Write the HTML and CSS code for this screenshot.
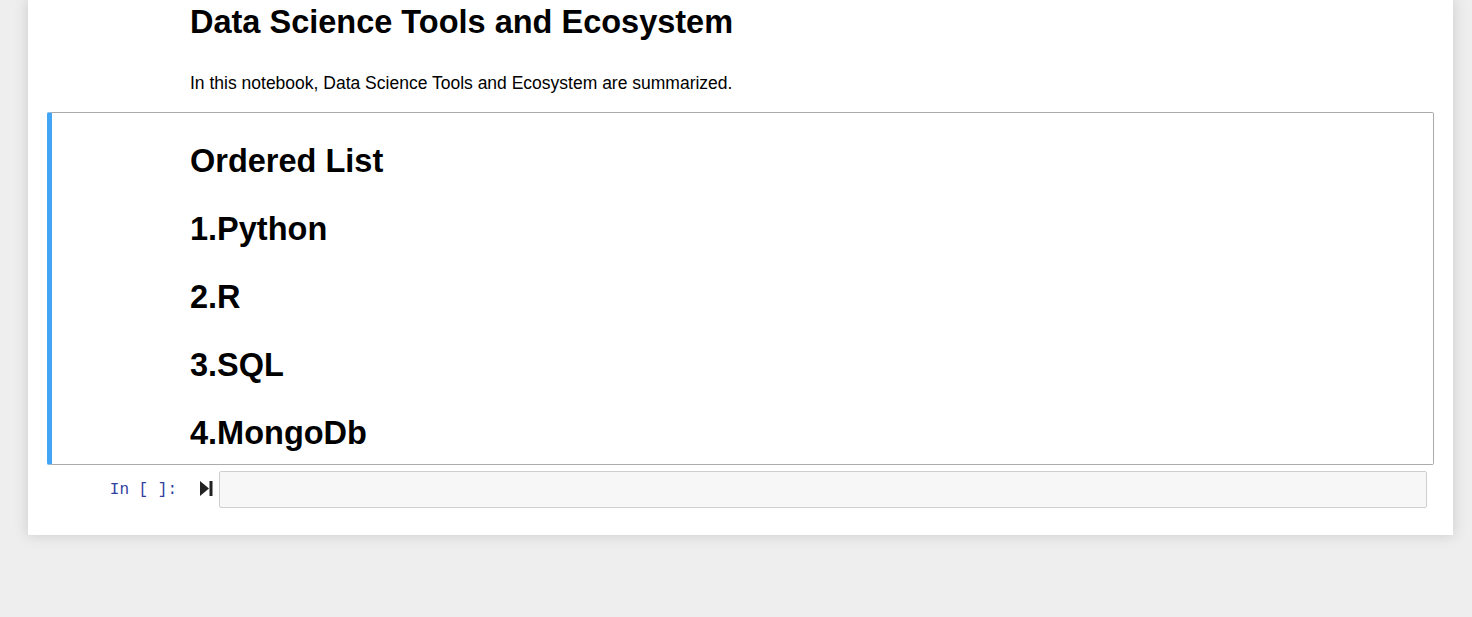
FILE: index.html
```html
<!DOCTYPE html>
<html>
<head>
<meta charset="utf-8">
<link rel="stylesheet" href="styles.css">
</head>
<body>
<div class="site">
  <div class="notebook">
    <div class="cell text-cell">
      <div class="prompt"></div>
      <div class="rendered">
        <h1 class="title">Data Science Tools and Ecosystem</h1>
        <p class="intro">In this notebook, Data Science Tools and Ecosystem are summarized.</p>
      </div>
    </div>
    <div class="cell text-cell selected">
      <div class="prompt"></div>
      <div class="rendered">
        <h1 class="item first">Ordered List</h1>
        <h1 class="item">1.Python</h1>
        <h1 class="item">2.R</h1>
        <h1 class="item">3.SQL</h1>
        <h1 class="item">4.MongoDb</h1>
      </div>
    </div>
    <div class="cell code-cell">
      <div class="prompt in-prompt">In&nbsp;[&nbsp;]:</div>
      <div class="run-btn">
        <svg width="13" height="15" viewBox="0 0 13 15"><path d="M0 0 L9 7.5 L0 15 Z" fill="#222"/><rect x="9.5" y="0" width="3" height="15" fill="#222"/></svg>
      </div>
      <div class="input-area"></div>
    </div>
  </div>
</div>
</body>
</html>
```

FILE: styles.css
```css
html, body {
  margin: 0;
  padding: 0;
  height: 100%;
  overflow: hidden;
}
body {
  background: #eeeeee;
  font-family: "Liberation Sans", Arial, sans-serif;
  color: #000;
}
.site {
  padding-left: 28px;
}
.notebook {
  width: 1425px;
  box-sizing: border-box;
  background: #fff;
  box-shadow: 0 0 12px 1px rgba(87, 87, 87, 0.2);
  padding: 0 19px 21px 19px;
  display: flex;
  flex-direction: column;
}
.cell {
  display: flex;
  border: 1px solid transparent;
  border-radius: 2px;
}
.text-cell .prompt {
  width: 142px;
  flex: none;
}
.rendered {
  flex: 1;
}
.title {
  font-size: 32.5px;
  line-height: 32.5px;
  margin: 4.5px 0 0 0;
  font-weight: bold;
}
.intro {
  font-size: 17.5px;
  line-height: 25px;
  margin: 32.5px 0 0 0;
  padding-bottom: 15px;
}
.selected {
  border-color: #ababab;
  border-left: 5px solid #42a5f5;
}
.selected .prompt {
  width: 138px;
}
.item {
  font-size: 32.5px;
  line-height: 32.5px;
  font-weight: bold;
  margin: 35.5px 0 0 0;
}
.item.first {
  margin-top: 32.5px;
}
.selected .rendered {
  padding-bottom: 14px;
}
.code-cell {
  padding: 5px 6px 5px 5px;
  align-items: flex-start;
}
.in-prompt {
  width: 124px;
  flex: none;
  font-family: "Liberation Mono", "Courier New", monospace;
  font-size: 16px;
  color: #303f9f;
  text-align: right;
  padding-top: 10px;
  line-height: 19px;
}
.run-btn {
  width: 19px;
  flex: none;
  display: flex;
  padding-left: 23px;
  padding-top: 10px;
}
.input-area {
  flex: 1;
  height: 35px;
  background: #f7f7f7;
  border: 1px solid #cfcfcf;
  border-radius: 2px;
}
```
